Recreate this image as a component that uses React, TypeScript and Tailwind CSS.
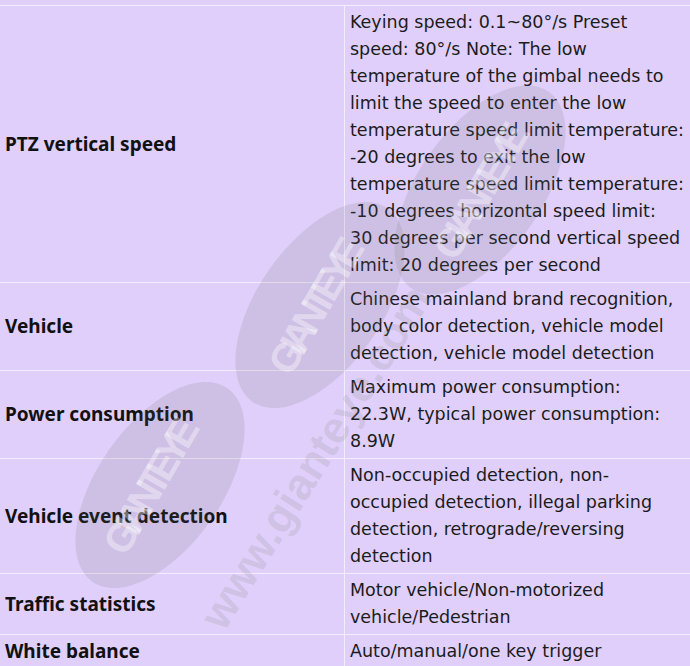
const rows = [
  {
    label: "PTZ vertical speed",
    value:
      "Keying speed: 0.1~80°/s Preset speed: 80°/s Note: The low temperature of the gimbal needs to limit the speed to enter the low temperature speed limit temperature: -20 degrees to exit the low temperature speed limit temperature: -10 degrees horizontal speed limit: 30\u00a0degrees per second vertical speed limit: 20 degrees per second",
  },
  {
    label: "Vehicle",
    value:
      "Chinese mainland brand recognition, body color detection, vehicle model detection, vehicle model detection",
  },
  {
    label: "Power consumption",
    value: "Maximum power consumption: 22.3W, typical power consumption: 8.9W",
  },
  {
    label: "Vehicle event detection",
    value:
      "Non-occupied detection, non-occupied detection, illegal parking detection, retrograde/reversing detection",
  },
  {
    label: "Traffic statistics",
    value: "Motor vehicle/Non-motorized vehicle/Pedestrian",
  },
  {
    label: "White balance",
    value: "Auto/manual/one key trigger",
  },
];

function Watermark() {
  return (
    <svg
      className="pointer-events-none absolute inset-0"
      width="690"
      height="666"
      viewBox="0 0 690 666"
    >
      <g fill="#6b6b6b" fillOpacity="0.14">
        <ellipse cx="480" cy="190" rx="120" ry="62" transform="rotate(-55 480 190)" />
        <ellipse cx="320" cy="305" rx="118" ry="62" transform="rotate(-55 320 305)" />
        <ellipse cx="160" cy="485" rx="118" ry="62" transform="rotate(-55 160 485)" />
      </g>
      <g
        fill="#ffffff"
        fillOpacity="0.4"
        fontFamily="'Liberation Sans', Arial, sans-serif"
        fontWeight="700"
        fontSize="40"
      >
        <text x="480" y="205" textAnchor="middle" transform="rotate(-60 480 190)" textLength="150">GIANTEYE</text>
        <text x="315" y="320" textAnchor="middle" transform="rotate(-60 315 305)" textLength="150">GIANTEYE</text>
        <text x="150" y="500" textAnchor="middle" transform="rotate(-60 150 485)" textLength="150">GIANTEYE</text>
      </g>
      <text
        x="320"
        y="470"
        textAnchor="middle"
        transform="rotate(-58 320 460)"
        fill="#8a8a8a"
        fillOpacity="0.2"
        fontFamily="'Liberation Sans', Arial, sans-serif"
        fontWeight="700"
        fontSize="44"
      >
        www.gianteye.com
      </text>
    </svg>
  );
}

export default function App() {
  return (
    <div className="relative w-[690px] h-[666px] overflow-hidden bg-[#dfcffa] text-[17.5px] leading-[27px] text-[#1c1c1c]">
      <div className="h-[6px] border-b border-[#f3eefe]" />
      {rows.map((row) => (
        <div
          key={row.label}
          className="grid grid-cols-[345px_345px] border-b border-[#f3eefe]"
        >
          <div className="flex items-center border-r border-[#f3eefe] px-[5px] py-[3px] font-['Noto_Sans',sans-serif] text-[19px] font-bold text-[#111]">
            {row.label}
          </div>
          <div className="pl-[5px] pr-[3px] py-[3px] font-['DejaVu_Sans',sans-serif]">{row.value}</div>
        </div>
      ))}
      <Watermark />
    </div>
  );
}
